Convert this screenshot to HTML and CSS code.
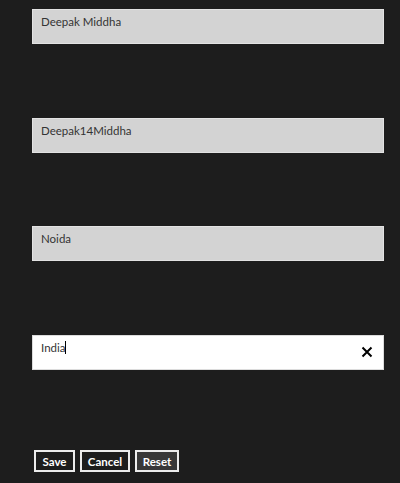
FILE: index.html
```html
<!DOCTYPE html>
<html>
<head>
<meta charset="utf-8">
<link rel="stylesheet" href="styles.css">
</head>
<body>
<div class="form">
  <div class="field">Deepak Middha</div>
  <div class="field">Deepak14Middha</div>
  <div class="field">Noida</div>
  <div class="field active"><span class="value">India<span class="caret"></span></span>
    <svg class="clear" width="12" height="12" viewBox="0 0 12 12"><path d="M1.5 1.5 L10.5 10.5 M10.5 1.5 L1.5 10.5" stroke="#000" stroke-width="2" fill="none"/></svg>
  </div>
  <div class="buttons">
    <button class="btn save">Save</button>
    <button class="btn cancel">Cancel</button>
    <button class="btn reset">Reset</button>
  </div>
</div>
</body>
</html>
```
FILE: styles.css
```css
html, body {
  margin: 0;
  padding: 0;
  background: #1d1d1d;
  width: 400px;
  height: 483px;
  overflow: hidden;
}
.form {
  display: flex;
  flex-direction: column;
  gap: 73.5px;
  padding: 9px 0 0 32px;
  width: 352px;
}
.field {
  box-sizing: border-box;
  height: 35px;
  background: #d3d3d3;
  border: 1px solid #e2e2e2;
  font-family: "Lato", "Open Sans", sans-serif;
  font-size: 11.5px;
  line-height: 15px;
  color: #333;
  padding: 4px 8px 0 8px;
  display: flex;
  align-items: flex-start;
  justify-content: space-between;
}
.field.active {
  background: #fff;
  border-color: #dcdcdc;
}
.value {
  display: flex;
  align-items: center;
}
.caret {
  display: inline-block;
  width: 1px;
  height: 13px;
  background: #000;
}
.clear {
  margin: 6px 2px 0 0;
}
.buttons {
  display: flex;
  gap: 5px;
  margin-top: 6.5px;
  padding-left: 2px;
}
.btn {
  box-sizing: border-box;
  height: 22px;
  padding: 0;
  background: #1d1d1d;
  border: 2px solid #ececec;
  color: #fff;
  font-family: "Lato", "Open Sans", sans-serif;
  font-weight: bold;
  font-size: 11.5px;
  line-height: 19px;
  text-align: center;
  margin: 0;
}
.save { width: 41px; }
.cancel { width: 50px; }
.reset { width: 44px; background: #383838; }
```
